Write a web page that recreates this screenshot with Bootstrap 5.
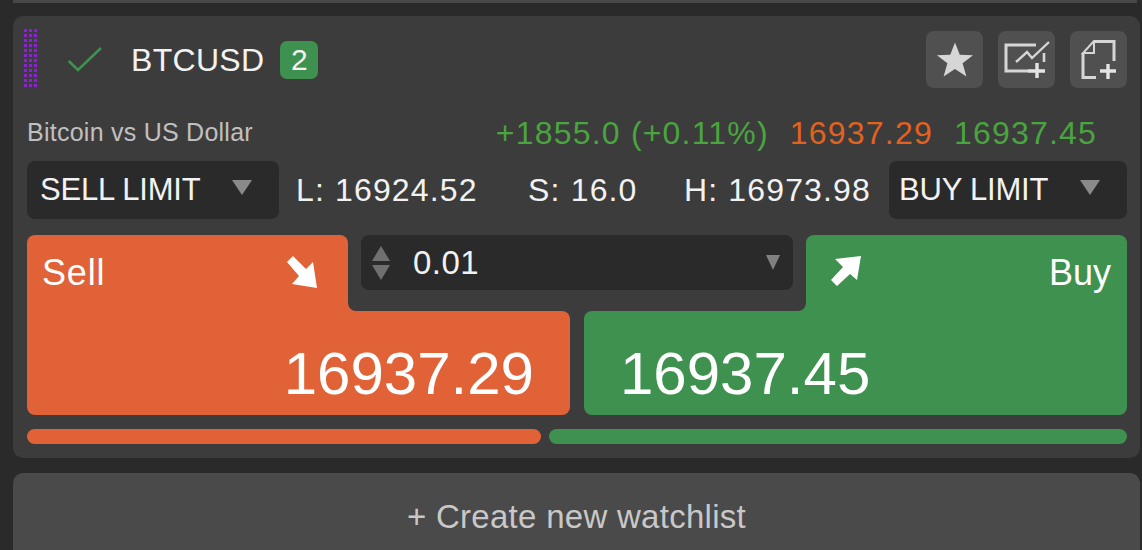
<!DOCTYPE html>
<html lang="en">
<head>
<meta charset="utf-8">
<title>BTCUSD</title>
<link rel="stylesheet" href="https://cdn.jsdelivr.net/npm/bootstrap@5.3.0/dist/css/bootstrap.min.css">
<style>
html,body{height:550px;overflow:hidden}
body{background:#2a2a2a;font-family:"Liberation Sans",Arial,sans-serif;color:#f2f2f2;padding:0 2px 0 13px}
.topedge{height:3px;background:#484848;margin-right:3px}
.wcard{background:#3c3c3c;border-radius:10px;height:442px;margin-top:13px;padding:12px 13px 0 11px}
.head{height:62px;padding-top:3px}
.grip{width:13px;height:61px;margin-top:-3px;background-image:radial-gradient(circle,#8f1fdc 1.4px,transparent 1.7px);background-size:5px 5px;background-position:-1px 0;flex:none}
.tick{margin-left:31px;margin-top:16px;flex:none}
.titlewrap{height:38px;margin-top:10px}
.sym{font-size:32px;margin-left:29px;line-height:1;letter-spacing:.3px}
.cnt{background:#3f9150;border-radius:7px;width:38px;height:38px;font-size:30px;line-height:38px;text-align:center;margin-left:16px}
.ibtns{gap:15px}
.ibtn{width:57px;height:57px;background:#505050;border-radius:8px;border:0;padding:0;display:flex;align-items:center;justify-content:center}
.info{height:50px;margin-top:18px;padding-left:3px;padding-right:30px;align-items:center}
.desc{font-size:25px;color:#c0c0c0;letter-spacing:.25px}
.quote{font-size:32px;letter-spacing:1.2px;gap:21px}
.up{color:#4aa43f}.dn{color:#e2621f}
.stats{height:58px;margin-top:3px;padding-left:3px;gap:0}
.sel{background:#2a2a2a;border-radius:8px;height:58px;font-size:31px;display:flex;align-items:center;justify-content:space-between;flex:none;color:#f2f2f2;letter-spacing:-.2px}
.sel-s{width:252px;padding:0 27px 0 13px}
.sel-b{width:238px;padding:0 27px 0 10px}
.tri{width:0;height:0;border-left:10px solid transparent;border-right:10px solid transparent;border-top:15px solid #8a8a8a;margin-top:-6px}
.stat{font-size:32px;letter-spacing:1.15px;white-space:nowrap}
.statrow{padding:0 18px 0 17px}
.trade{display:grid;grid-template-columns:321px 222px 14px 222px 321px;grid-template-rows:76px 104px;margin:16px 0 0 3px;width:1100px}
.stop,.sbot{background:#e06236;color:#fff}
.btop,.bbot{background:#3f9150;color:#fff}
.stop{grid-column:1;grid-row:1;border-radius:8px 8px 0 0;padding:18px 30px 0 15px;display:flex;justify-content:space-between;font-size:36px;line-height:40px}
.stop span{letter-spacing:.8px}
.btop{grid-column:5;grid-row:1;border-radius:8px 8px 0 0;padding:18px 16px 0 24px;display:flex;justify-content:space-between;font-size:36px;line-height:40px}
.arrow{margin-top:2px}
.midwrap{grid-column:2/5;grid-row:1;background:linear-gradient(90deg,#e06236 50%,#3f9150 50%)}
.midin{background:#3c3c3c;height:100%;border-radius:0 0 8px 8px;padding:0 13px}
.qty{background:#2a2a2a;border-radius:8px;height:55px;display:flex;align-items:center;padding:0 13px 0 11px;font-size:33px;color:#f2f2f2;letter-spacing:.5px}
.spin{display:flex;flex-direction:column;gap:4px;margin-right:23px}
.spin i{display:block;width:0;height:0;border-left:9px solid transparent;border-right:9px solid transparent}
.spin .u{border-bottom:15px solid #707070}.spin .d{border-top:15px solid #707070}
.tri2{width:0;height:0;border-left:7px solid transparent;border-right:7px solid transparent;border-top:15px solid #808080;margin-left:auto}
.sbot{grid-column:1/3;grid-row:2;border-radius:0 8px 8px 8px;text-align:right;padding:30px 36px 0 0;font-size:60px;line-height:66px}
.bbot{grid-column:4/6;grid-row:2;border-radius:8px 0 8px 8px;padding:30px 0 0 36px;font-size:60px;line-height:66px}
.bars{gap:8px;margin:14px 0 0 3px;width:1100px}
.bar1,.bar2{height:15px;border-radius:8px}
.bar1{width:514px;background:#e06236}
.bar2{flex:1;background:#3f9150}
.newlist{display:block;width:100%;height:77px;margin-top:15px;background:#4a4a4a;border:0;border-radius:10px 10px 0 0;color:#c8c8c8;font-size:33px;padding:10px 0 0;letter-spacing:.28px}
</style>
</head>
<body>
<div class="topedge"></div>
<div class="wcard">
  <div class="head d-flex align-items-start">
    <div class="grip"></div>
    <svg class="tick" width="34" height="25" viewBox="0 0 34 25"><path d="M.7 14 L10 23 L33 1" fill="none" stroke="#3f9150" stroke-width="2.6"/></svg>
    <div class="titlewrap d-flex align-items-center"><span class="sym">BTCUSD</span><span class="cnt">2</span></div>
    <div class="ibtns d-flex ms-auto">
      <button class="ibtn" type="button" aria-label="Favourite"><svg width="38" height="37" viewBox="0 0 40 38"><path d="M20 1 L25 14 L39 14.5 L28 23 L32 37 L20 29 L8 37 L12 23 L1 14.5 L15 14 Z" fill="#d6d6d6"/></svg></button>
      <button class="ibtn" type="button" aria-label="Add chart"><svg width="46" height="37" viewBox="0 0 46 37"><path d="M32 4 H2 V30 H25" fill="none" stroke="#d6d6d6" stroke-width="3"/><path d="M40 12 V21" fill="none" stroke="#d6d6d6" stroke-width="2.6"/><path d="M12 21 L23 11 L28 17 L45 1" fill="none" stroke="#d6d6d6" stroke-width="2.4"/><path d="M33 22 V37 M24 30 H41" fill="none" stroke="#e4e4e4" stroke-width="3.4"/></svg></button>
      <button class="ibtn" type="button" aria-label="Add page"><svg width="36" height="39" viewBox="0 0 36 39"><path d="M13 1.5 H33 V21 M2 13 V37.5 H15" fill="none" stroke="#d6d6d6" stroke-width="3"/><path d="M13 1 V13 H2 Z" fill="none" stroke="#d6d6d6" stroke-width="2"/><path d="M27 24 V39 M19 31 H35" fill="none" stroke="#e4e4e4" stroke-width="3.4"/></svg></button>
    </div>
  </div>
  <div class="info d-flex justify-content-between">
    <span class="desc">Bitcoin vs US Dollar</span>
    <span class="quote d-flex"><span class="up">+1855.0 (+0.11%)</span><span class="dn">16937.29</span><span class="up">16937.45</span></span>
  </div>
  <div class="stats d-flex align-items-center">
    <div class="sel sel-s"><span>SELL LIMIT</span><span class="tri"></span></div>
    <div class="statrow d-flex justify-content-between flex-grow-1">
      <span class="stat">L: 16924.52</span><span class="stat ms-1">S: 16.0</span><span class="stat">H: 16973.98</span>
    </div>
    <div class="sel sel-b"><span>BUY LIMIT</span><span class="tri"></span></div>
  </div>
  <div class="trade">
    <div class="stop"><span>Sell</span><svg class="arrow" width="32" height="34" viewBox="0 0 32 34"><path d="M1 7 L7 1 L20 14 L27 7 L31 33 L6 29 L13 21 Z" fill="#fff"/></svg></div>
    <div class="midwrap"><div class="midin"><div class="qty"><span class="spin"><i class="u"></i><i class="d"></i></span><span>0.01</span><span class="tri2"></span></div></div></div>
    <div class="btop"><svg class="arrow" width="32" height="32" viewBox="0 0 32 32"><path d="M1 25 L7 31 L20 19 L27 25 L31 1 L5 4 L13 12 Z" fill="#fff"/></svg><span>Buy</span></div>
    <div class="sbot">16937.29</div>
    <div class="bbot">16937.45</div>
  </div>
  <div class="bars d-flex"><div class="bar1"></div><div class="bar2"></div></div>
</div>
<button class="newlist" type="button">+ Create new watchlist</button>
</body>
</html>
